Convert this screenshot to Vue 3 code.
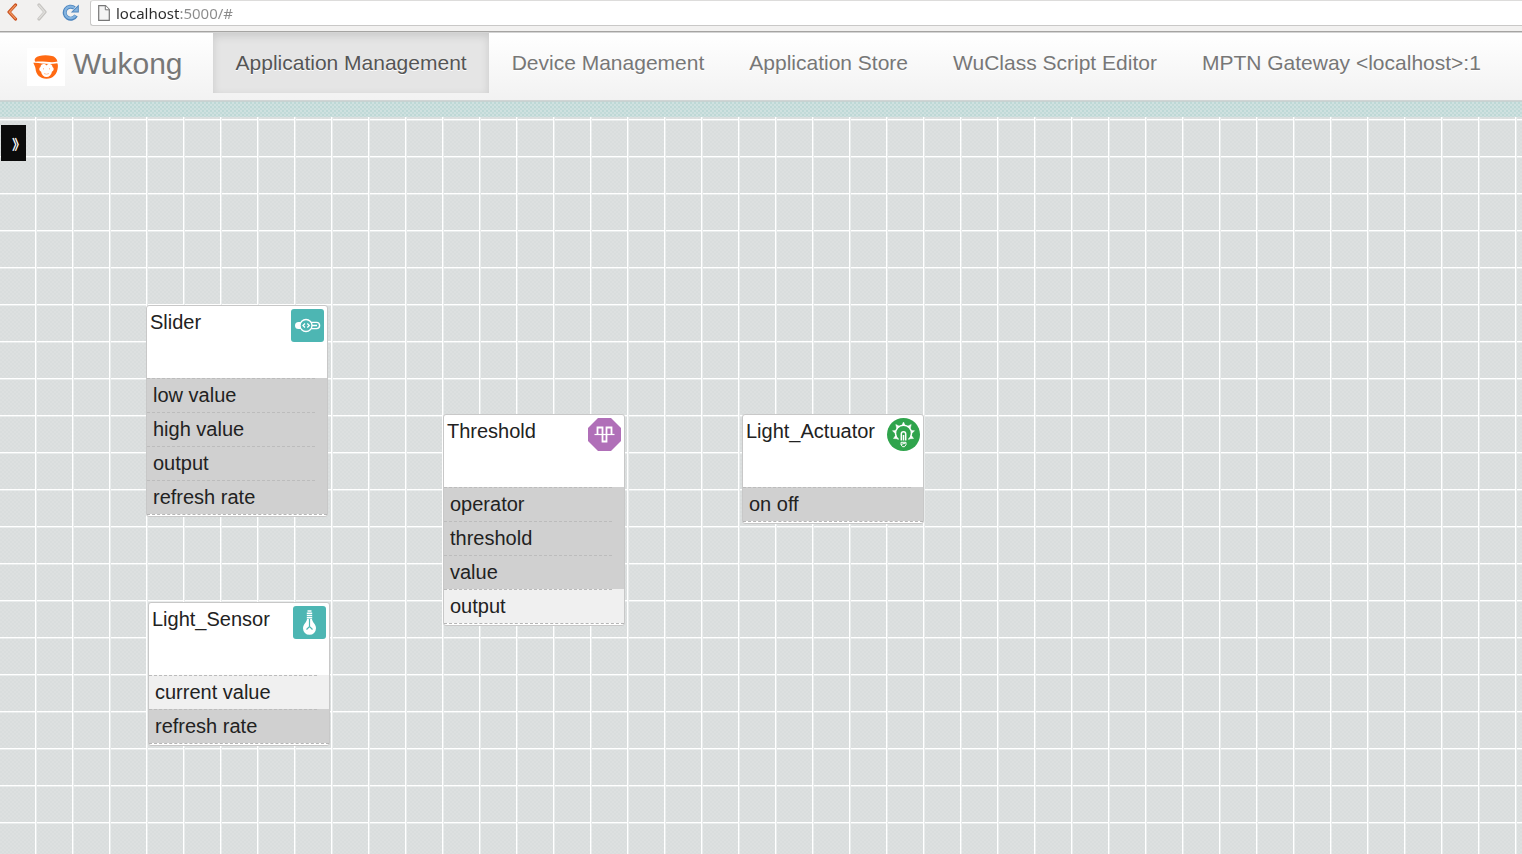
<script setup>
import { ref } from 'vue'

const url = ref('localhost:5000/#')
const activeTab = ref('Application Management')
const tabs = [
  'Application Management',
  'Device Management',
  'Application Store',
  'WuClass Script Editor',
  'MPTN Gateway <localhost>:1',
]

const nodes = [
  {
    name: 'Slider', icon: 'slider', x: 146, y: 188,
    ports: [{ name: 'low value' }, { name: 'high value' }, { name: 'output' }, { name: 'refresh rate' }],
  },
  {
    name: 'Threshold', icon: 'threshold', x: 443, y: 297,
    ports: [{ name: 'operator' }, { name: 'threshold' }, { name: 'value' }, { name: 'output', out: true }],
  },
  {
    name: 'Light_Actuator', icon: 'actuator', x: 742, y: 297,
    ports: [{ name: 'on off' }],
  },
  {
    name: 'Light_Sensor', icon: 'sensor', x: 148, y: 485,
    ports: [{ name: 'current value', out: true }, { name: 'refresh rate' }],
  },
]
</script>

<template>
  <div class="window">
    <div class="toolbar">
      <button class="tool" type="button" aria-label="Back">
        <svg width="12" height="18" viewBox="0 0 12 18">
          <path d="M9.500 2 3 9l6.500 7" fill="none" stroke="#c9511f" stroke-width="3.200" stroke-linecap="round" stroke-linejoin="round" />
          <path d="M9.300 2.300 3.300 9l6 6.500" fill="none" stroke="#f0965f" stroke-width="1.200" stroke-linecap="round" />
        </svg>
      </button>
      <button class="tool" type="button" aria-label="Forward">
        <svg width="12" height="18" viewBox="0 0 12 18">
          <path d="M3 2l6 7-6 7" fill="none" stroke="#c4c2bf" stroke-width="3.200" stroke-linecap="round" stroke-linejoin="round" />
          <path d="M3 2.300 8.700 9 3 15.500" fill="none" stroke="#deddda" stroke-width="1.400" stroke-linecap="round" />
        </svg>
      </button>
      <button class="tool" type="button" aria-label="Reload">
        <svg width="18" height="18" viewBox="0 0 18 18">
          <path d="M14 12.500A6 6 0 1 1 12.500 5" fill="none" stroke="#4c84bd" stroke-width="4" />
          <path d="M16.800 1.500v8H8.800z" fill="#4c84bd" />
          <path d="M13.500 12.700A5.800 5.800 0 1 1 12.500 5" fill="none" stroke="#83b3e0" stroke-width="2.200" />
          <path d="M15.800 4v4.500H11z" fill="#83b3e0" />
        </svg>
      </button>
      <div class="address">
        <svg width="12" height="16" viewBox="0 0 12 16">
          <path d="M.7.7h6.800l3.800 3.800v10.800H.7z" fill="#f4f4f4" stroke="#777" stroke-width="1.200" />
          <path d="M7.300.8v4h4" fill="#fff" stroke="#777" />
        </svg>
        <input v-model="url" class="url" type="text" aria-label="Address" />
      </div>
    </div>

    <header class="navbar">
      <a class="brand" href="#">
        <svg class="logo" width="38" height="38" viewBox="0 0 38 38">
          <rect width="38" height="38" fill="#fff" />
          <path d="M8.500 10C11 7.500 18 6.500 25 8c2.500.6 4.500 2 5.500 5.500-6 2-12-.5-22 .2-1-.8-1.200-2.500 0-3.700z" fill="#ff6a13" />
          <path d="M6.300 14.700c7-.5 13 2.500 24 .6.700 1.200.7 2.500.5 4.200C30.300 26 26 30.800 19.500 30.800 13 30.800 9 26.500 8.500 20.500 8.200 18.500 7.200 17 6.300 14.700z" fill="#ff6a13" />
          <path d="M13.500 19c0-3 4-4 6-1.500 2-2.500 6-1.500 6 1.500 1.800 1 1.500 4-.5 4.500-.5 3.500-2.800 5.500-5.500 5.500s-5-2-5.500-5.500c-2-.5-2.300-3.500-.5-4.500z" fill="#fff" />
          <path d="M16.500 20v1.500M22.500 20v1.500M17 25.500q2.500 1.500 5 0" fill="none" stroke="#ffc4a0" />
        </svg>
        <span>Wukong</span>
      </a>
      <nav class="tabs">
        <a
          v-for="tab in tabs"
          :key="tab"
          href="#"
          class="tab"
          :class="{ active: tab === activeTab }"
          @click.prevent="activeTab = tab"
        >{{ tab }}</a>
      </nav>
    </header>

    <div class="strip"></div>

    <main class="canvas">
      <button class="drawer" type="button" aria-label="Open panel">》</button>

      <section
        v-for="node in nodes"
        :key="node.name"
        class="node"
        :style="{ left: node.x + 'px', top: node.y + 'px' }"
      >
        <div class="head">
          <h2>{{ node.name }}</h2>
          <svg width="33" height="33" viewBox="0 0 33 33">
            <template v-if="node.icon === 'slider'">
              <rect width="33" height="33" rx="3" fill="#4db6b3" />
              <path d="M11 13H7.500a3.500 3.500 0 0 0 0 7H11z" fill="#fff" />
              <path d="M19 13.400h6.500a3.100 3.100 0 0 1 0 6.200H19M20 16.500h6" fill="none" stroke="#fff" stroke-width="1.400" />
              <circle cx="15" cy="16.500" r="6" fill="#4db6b3" stroke="#fff" stroke-width="1.300" />
              <path d="M14 14.500l-2 2 2 2M16.300 14.500l2 2-2 2" fill="none" stroke="#fff" stroke-width="1.300" />
            </template>
            <template v-else-if="node.icon === 'threshold'">
              <path d="M10 0h13l10 10v13L23 33H10L0 23V10z" fill="#b06fb8" />
              <path d="M6.500 16.500h20" stroke="#fff" stroke-width="1.200" />
              <path d="M9.500 17V9.500h5V23.500h4V9.500h5v7.500" fill="none" stroke="#fff" stroke-width="1.800" />
            </template>
            <template v-else-if="node.icon === 'actuator'">
              <circle cx="16.500" cy="16.500" r="16.500" fill="#2fa44c" />
              <path d="M11.500 21.500A8 8 0 1 1 21.500 21.500" fill="none" stroke="#fff" stroke-width="1.500" />
              <path d="M14.800 7.500 16.500 4l1.700 3.500M20.500 8.300l3.700-1.800-1 4M24 12.500l3.500.2-2.700 2.800M24.500 17.500l2 3-3.800.2M12.500 8.300 8.800 6.500l1 4M9 12.500l-3.500.2L8.200 15.500M8.500 17.500l-2 3 3.800.2" fill="#fff" stroke="#fff" stroke-width=".5" />
              <path d="M14.300 22.500v-6.500a2.200 2.200 0 0 1 4.400 0v6.500M16.500 17v5.500" fill="none" stroke="#fff" stroke-width="1.500" />
              <path d="M14 24.300h5v2.400l-1.500 2h-2l-1.500-2zM14 26.500l4.500-1.500" fill="none" stroke="#fff" />
            </template>
            <template v-else>
              <rect width="33" height="33" rx="3" fill="#4db6b3" />
              <path d="M14.500 5h4M13.800 7.300h5.400M13.800 9.500h5.400M13.800 11.700h5.400" stroke="#fff" stroke-width="1.400" />
              <path d="M14 13h5c0 3 4 5 4 9.300a6.500 6.500 0 0 1-13 0C10 18 14 16 14 13z" fill="#fff" />
              <path d="M16.500 13v8M13.500 23.500l3-3 3 3" fill="none" stroke="#4db6b3" stroke-width="1.200" />
            </template>
          </svg>
        </div>
        <ul class="ports">
          <li v-for="port in node.ports" :key="port.name" :class="{ out: port.out }">
            <span>{{ port.name }}</span>
          </li>
        </ul>
      </section>
    </main>
  </div>
</template>

<style>
body {
  margin: 0;
}
</style>

<style scoped>
.window {
  display: flex;
  flex-direction: column;
  min-height: 100vh;
  box-sizing: border-box;
  font-family: "Liberation Sans", Arial, sans-serif;
  color: #222;
  background: #f2f1f0;
}

button {
  border: 0;
  padding: 0;
  background: none;
  cursor: pointer;
}

.toolbar {
  display: flex;
  align-items: flex-start;
  height: 31px;
  border-bottom: 1px solid #a5a4a2;
  background: #f2f1f0;
}

.tool {
  display: flex;
  justify-content: center;
  width: 29px;
  padding-top: 3px;
}

.tool:first-child {
  width: 24px;
}

.tool:nth-child(2) {
  width: 36px;
}

.tool:nth-child(3) {
  width: 21px;
}

.address {
  display: flex;
  flex: 1;
  align-items: center;
  gap: 6px;
  height: 24px;
  margin-left: 9px;
  padding-left: 7px;
  border: 1px solid #c9c8c7;
  border-top-color: #dddcdb;
  border-right: 0;
  border-radius: 3px 0 0 3px;
  background: #fff;
}

.url {
  flex: 1;
  min-width: 0;
  height: 22px;
  padding: 0;
  border: 0;
  outline: 0;
  font: 15px/22px "Noto Sans", "Open Sans", sans-serif;
  color: transparent;
  background: linear-gradient(90deg, #2c2c2c 64px, #8b8b8b 64px);
  background-clip: text;
  -webkit-background-clip: text;
}

.navbar {
  display: flex;
  align-items: flex-start;
  height: 67px;
  border-top: 1px solid #d4d4d4;
  border-bottom: 1px solid #d0d4d4;
  background: linear-gradient(#fff, #f2f2f2);
}

.brand {
  display: flex;
  align-items: center;
  gap: 8px;
  padding: 0 30px 0 27px;
  font-size: 30px;
  line-height: 62px;
  color: #777;
  text-decoration: none;
  text-shadow: 0 1px 0 #fff;
}

.logo {
  margin-top: 5px;
}

.tabs {
  display: flex;
}

.tab {
  padding: 0 22px 0 23px;
  font-size: 21px;
  line-height: 60px;
  color: #777;
  text-decoration: none;
  text-shadow: 0 1px 0 #fff;
  white-space: nowrap;
}

.tab.active {
  color: #555;
  background: #e5e5e5;
  box-shadow: inset 0 3px 8px rgba(0, 0, 0, 0.125);
}

.strip {
  height: 16px;
  border-top: 1px solid #c6d2d1;
  box-sizing: border-box;
  background:
    conic-gradient(#bdd8d6 25%, transparent 0 50%, #c2dad8 0 75%, transparent 0) 0 0 / 4px 4px,
    #cfe1e0;
}

.canvas {
  position: relative;
  flex: 1;
  margin-top: 1px;
  background:
    linear-gradient(90deg, #fff 1px, #e9ecec 1px 2px, transparent 2px) 35px 0 / 37px 37px,
    linear-gradient(#fff 1px, #e9ecec 1px 2px, transparent 2px) 0 2px / 37px 37px,
    conic-gradient(#d9dddd 25%, transparent 0 50%, #d9dddd 0 75%, transparent 0) 0 0 / 4px 4px,
    #dde0e0;
}

.strip + .canvas {
  margin-top: 0;
}

.drawer {
  position: absolute;
  top: 8px;
  left: 1px;
  width: 25px;
  height: 36px;
  padding-left: 11px;
  overflow: hidden;
  font: 700 14px/36px "Noto Sans CJK SC", sans-serif;
  text-align: left;
  color: #fff;
  background: #0b0b0b;
}

.node {
  position: absolute;
  box-sizing: border-box;
  width: 182px;
  padding-bottom: 1px;
  border: 1px solid #c8c8c8;
  border-radius: 3px;
  background: #fff;
}

.head {
  display: flex;
  align-items: flex-start;
  justify-content: space-between;
  height: 69px;
  padding: 3px 3px 0;
}

h2 {
  margin: 0;
  font-size: 20px;
  font-weight: 400;
  line-height: 27px;
}

.ports {
  margin: 0;
  padding: 0;
  border-bottom: 1px dashed #b5b5b5;
  list-style: none;
}

.ports li {
  height: 34px;
  padding-right: 12px;
  background: #d0d0d0;
}

.ports li.out {
  background: #f0f0f0;
}

.ports span {
  display: block;
  padding-left: 6px;
  border-top: 1px dashed #bcbcbc;
  font-size: 20px;
  line-height: 33px;
}
</style>
